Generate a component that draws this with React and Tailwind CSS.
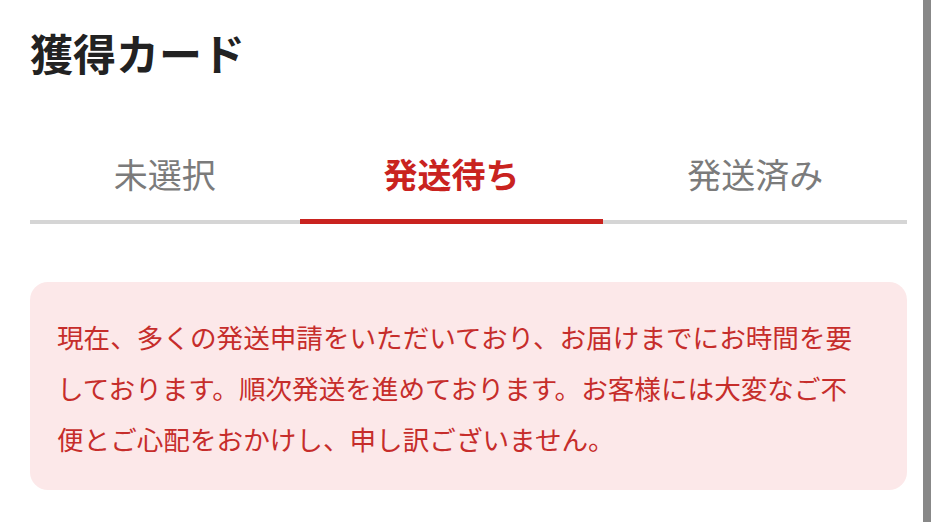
import React, { useState } from 'react';

const tabs = ['未選択', '発送待ち', '発送済み'];

function App() {
  const [active, setActive] = useState(1);

  return (
    <div
      className="flex h-[522px] w-[938px] bg-white overflow-hidden"
      style={{ fontFamily: '"Noto Sans CJK JP", "Noto Sans", sans-serif' }}
    >
      <div className="flex-1 pl-[30px] pr-[16px]">
        <h1 className="mt-[26px] text-[43px] leading-[52px] font-bold text-[#222222]">獲得カード</h1>

        <div className="mt-[76px] flex">
          {tabs.map((t, i) => (
            <button
              key={t}
              onClick={() => setActive(i)}
              className={
                i === active
                  ? 'flex-auto pb-[25px] text-[34px] leading-[40px] font-bold text-[#c9231f] border-b-[5px] border-[#c9231f]'
                  : 'flex-auto pb-[26px] text-[34px] leading-[40px] text-[#7b7b7b] border-b-[4px] border-[#d5d5d5]'
              }
            >
              {t}
            </button>
          ))}
        </div>

        <div className="mt-[58px] rounded-[18px] bg-[#fce8e9] pl-[27px] pr-[40px] pt-[29px] pb-[26px]">
          <p className="text-[26.6px] leading-[51px] text-[#c62d2b]">
            現在、多くの発送申請をいただいており、お届けまでにお時間を要しております。順次発送を進めております。お客様には大変なご不便とご心配をおかけし、申し訳ございません。
          </p>
        </div>
      </div>
      <div className="w-[8px] h-full bg-[#888888]"></div>
      <div className="w-[7px] h-full bg-white"></div>
    </div>
  );
}

export default App;
